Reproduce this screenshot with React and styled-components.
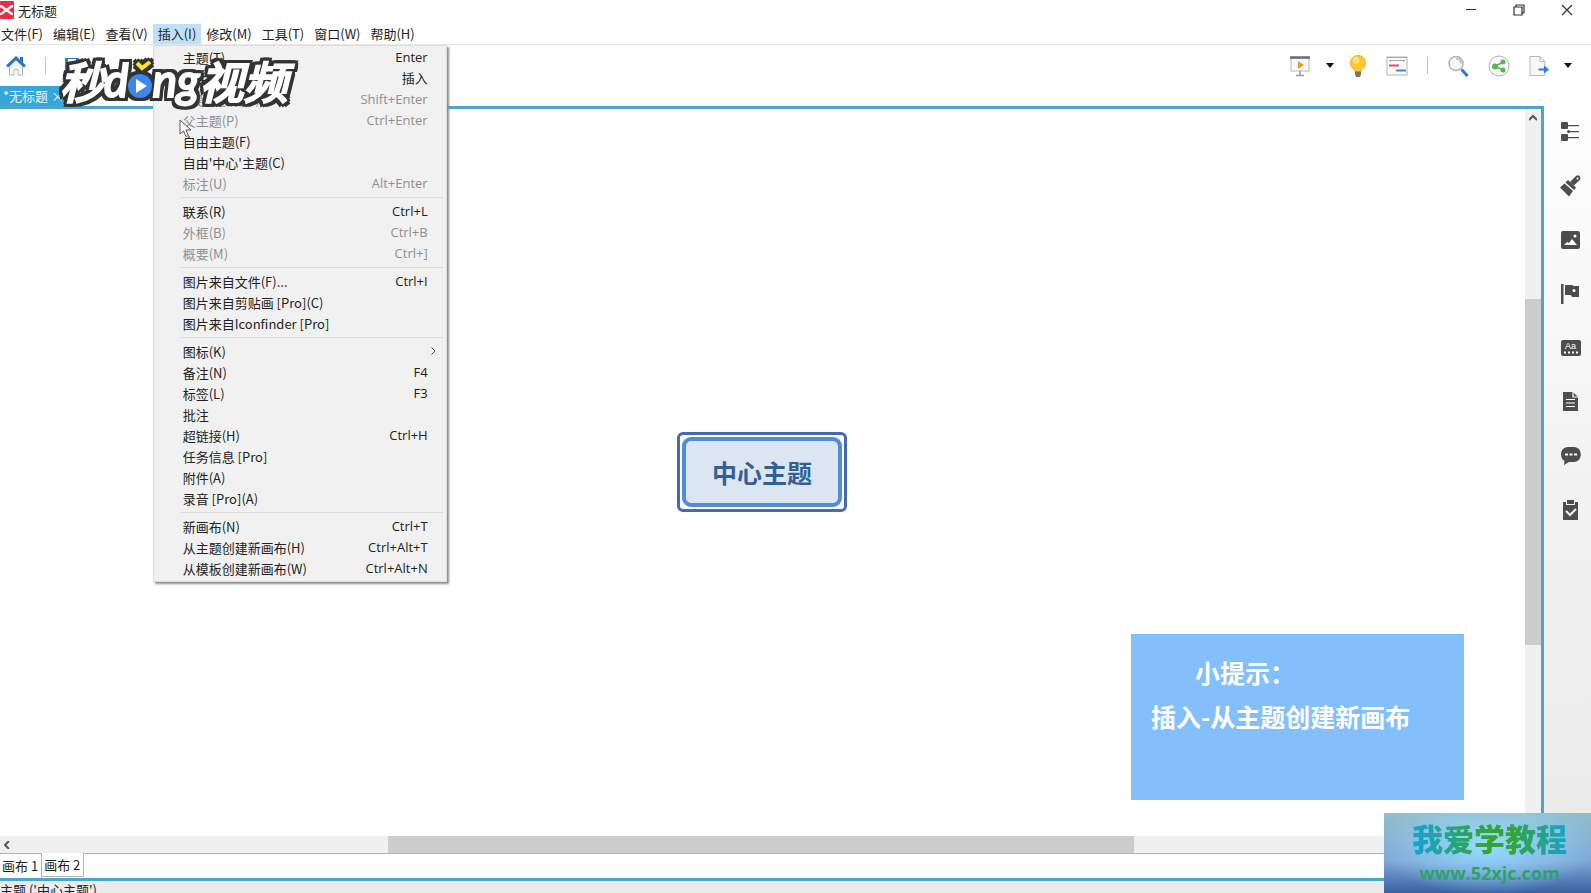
import React, { useState } from "react"
import styled, { createGlobalStyle } from "styled-components"

const MENUS = [
  "文件(F)",
  "编辑(E)",
  "查看(V)",
  "插入(I)",
  "修改(M)",
  "工具(T)",
  "窗口(W)",
  "帮助(H)",
]

const INSERT_GROUPS = [
  [
    { label: "主题(T)", keys: "Enter" },
    { label: "子主题(S)", keys: "插入" },
    { label: "主题(之前)(E)", keys: "Shift+Enter", disabled: true },
    { label: "父主题(P)", keys: "Ctrl+Enter", disabled: true },
    { label: "自由主题(F)" },
    { label: "自由'中心'主题(C)" },
    { label: "标注(U)", keys: "Alt+Enter", disabled: true },
  ],
  [
    { label: "联系(R)", keys: "Ctrl+L" },
    { label: "外框(B)", keys: "Ctrl+B", disabled: true },
    { label: "概要(M)", keys: "Ctrl+]", disabled: true },
  ],
  [
    { label: "图片来自文件(F)...", keys: "Ctrl+I" },
    { label: "图片来自剪贴画 [Pro](C)" },
    { label: "图片来自Iconfinder [Pro]" },
  ],
  [
    { label: "图标(K)", submenu: true },
    { label: "备注(N)", keys: "F4" },
    { label: "标签(L)", keys: "F3" },
    { label: "批注" },
    { label: "超链接(H)", keys: "Ctrl+H" },
    { label: "任务信息 [Pro]" },
    { label: "附件(A)" },
    { label: "录音 [Pro](A)" },
  ],
  [
    { label: "新画布(N)", keys: "Ctrl+T" },
    { label: "从主题创建新画布(H)", keys: "Ctrl+Alt+T" },
    { label: "从模板创建新画布(W)", keys: "Ctrl+Alt+N" },
  ],
]

// --- Icons ---

const AppIcon = () => (
  <svg width="14" height="18" viewBox="0 0 14 18">
    <rect width="14" height="18" rx="1" fill="#ee2a48" />
    <path
      d="M0 5C3 5 4 8.500 6.500 8.500S10 5 13 5M0 13C3 13 4 9.500 6.500 9.500S10 13 13 13"
      fill="none"
      stroke="#fff"
      strokeWidth="2.500"
    />
  </svg>
)

const HomeIcon = () => (
  <svg width="20" height="20" viewBox="0 0 20 20">
    <path d="M3.500 10v9h4.500v-5.500h4V19h4.500v-9L10 4z" fill="#f6f6f6" stroke="#b5b5b5" />
    <path d="M1 10.500L10 2l9 8.500" fill="none" stroke="#2273dc" strokeWidth="3" />
    <path d="M14 1h3v6l-3-3z" fill="#2273dc" />
  </svg>
)

const SaveIcon = () => (
  <svg width="14" height="16" viewBox="0 0 14 16">
    <path d="M0 0h14v16H0z" fill="#2b7be0" />
    <path d="M3 1h8v5H3z" fill="#fff" />
  </svg>
)

const PresentIcon = () => (
  <svg width="22" height="22" viewBox="0 0 22 22">
    <rect x="2" y="3" width="18" height="13" fill="#fafafa" stroke="#b9b9b9" />
    <path d="M1 2.500h20" stroke="#6c6c6c" strokeWidth="2.500" />
    <path d="M11 16v4M7 20.500h8" stroke="#9b9b9b" strokeWidth="1.500" />
    <path d="M9 6l6 4-6 4z" fill="#f39a1d" />
  </svg>
)

const BulbIcon = () => (
  <svg width="18" height="24" viewBox="0 0 18 24">
    <path
      d="M9 1.500a7.500 7.500 0 0 0-4.500 13.500c1 1 1.500 1.500 1.500 2.500h6c0-1 .5-1.500 1.500-2.500A7.500 7.500 0 0 0 9 1.500z"
      fill="#fdc931"
      stroke="#f0b323"
    />
    <ellipse cx="7" cy="6.500" rx="3" ry="3.500" fill="#ffe48a" />
    <path d="M6 17.500h6V21l-1.500 2h-3L6 21z" fill="#84735a" />
  </svg>
)

const GanttIcon = () => (
  <svg width="22" height="20" viewBox="0 0 22 20">
    <rect x="1" y="1" width="20" height="18" fill="#fafafa" stroke="#b5b5b5" />
    <path d="M1 1.500h20M3 4.500h16M4.500 4v2M17.500 4v2" stroke="#a8a8a8" />
    <path d="M3 9.500h10" stroke="#e05252" strokeWidth="2" />
    <path d="M10 14.500h10" stroke="#3e85d8" strokeWidth="2" />
  </svg>
)

const SearchIcon = () => (
  <svg width="22" height="22" viewBox="0 0 22 22">
    <circle cx="9" cy="8.500" r="7" fill="#f5f8fb" stroke="#b0b3b8" strokeWidth="1.500" />
    <path d="M9 3.500a5 5 0 0 1 5 5" fill="none" stroke="#8ec1f5" strokeWidth="1.500" />
    <path d="M14.500 14.500l6 6.500" stroke="#2b77dd" strokeWidth="3" />
  </svg>
)

const ShareIcon = () => (
  <svg width="22" height="22" viewBox="0 0 22 22">
    <circle cx="11" cy="11" r="10" fill="#fbfbfb" stroke="#b5b5b5" />
    <path d="M15 7L7 11.500l8 3.500" fill="none" stroke="#59b653" strokeWidth="1.500" />
    <circle cx="15" cy="7" r="2.500" fill="#59b653" />
    <circle cx="7" cy="11.500" r="3" fill="#59b653" />
    <circle cx="15" cy="15" r="2.500" fill="#59b653" />
  </svg>
)

const ExportIcon = () => (
  <svg width="20" height="22" viewBox="0 0 20 22">
    <path d="M1 1.500h10l5 5v14H1z" fill="#f8f8f8" stroke="#b9b9b9" />
    <path d="M11 1.500v5h5" fill="none" stroke="#b9b9b9" />
    <path d="M9.500 14.500H16" stroke="#2b7be0" strokeWidth="2" />
    <path d="M15 10.500l5 4-5 4z" fill="#2b7be0" />
  </svg>
)

const CaretIcon = () => (
  <svg width="8" height="5" viewBox="0 0 8 5">
    <path d="M0 0h8L4 5z" fill="#111" />
  </svg>
)

const Chevron = ({ d }) => (
  <svg width="8" height="8" viewBox="0 0 8 8">
    <path d={d} fill="none" stroke="#555" strokeWidth="2" />
  </svg>
)

const ThinChevron = () => (
  <svg width="5" height="8" viewBox="0 0 5 8">
    <path d="M.5.5L4 4 .5 7.500" fill="none" stroke="#555" />
  </svg>
)

const SIDE_VIEWS = [
  {
    name: "大纲",
    art: (
      <>
        <rect x="1" y="1" width="7" height="7" rx="1" />
        <rect x="1" y="13" width="7" height="7" rx="1" />
        <circle cx="8.500" cy="10.500" r="1.500" />
        <path d="M8 4h11v1.200H8zM9 10h10v1.200H9zM8 16h11v1.200H8z" />
      </>
    ),
  },
  {
    name: "格式",
    art: (
      <>
        <path d="M0 12.500l4.500-4 8.500 7.500-4 5.500z" />
        <path d="M5.500 7.500L8 5l8 7.500-2 2.500z" />
        <path d="M10 7l6-6c2-2 5.500 1 4 3.500L14 10.500z" />
        <circle cx="17.500" cy="3.500" r="1" fill="#fff" />
      </>
    ),
  },
  {
    name: "图片",
    art: (
      <>
        <rect x="1" y="2" width="19" height="18" rx="2" />
        <path d="M4 16l3-3 2 1 3-4 5 6z" fill="#fff" />
        <circle cx="15" cy="7" r="1.500" fill="#fff" />
      </>
    ),
  },
  {
    name: "图标",
    art: (
      <>
        <path d="M1 1h2.500v20H1zM5 2h7l1.500 1H19v11h-7l-1-2H5z" />
        <circle cx="14" cy="7.500" r="1.500" fill="#fff" />
      </>
    ),
  },
  {
    name: "标签",
    art: (
      <>
        <rect x="1" y="3" width="20" height="16" rx="2" />
        <text x="5" y="12" fontSize="9" fontFamily="Liberation Sans" fill="#fff">
          Aa
        </text>
        <path d="M4 15.500h15" stroke="#fff" strokeWidth="2" strokeDasharray="2 2" />
      </>
    ),
  },
  {
    name: "备注",
    art: (
      <>
        <path d="M3 1h10l5 5v14H3z" />
        <path d="M13 1v5h5M6 8.500h9M6 12h9M6 15.500h9" fill="none" stroke="#fff" strokeWidth="1.200" />
      </>
    ),
  },
  {
    name: "批注",
    art: (
      <>
        <path d="M8 2h6c9 0 9 15 0 15H9l-5 3 .5-4C-1 13 0 2 8 2z" />
        <path d="M5 8.500h3v2H5zM9.500 8.500h3v2h-3zM14 8.500h3v2h-3z" fill="#fff" />
      </>
    ),
  },
  {
    name: "任务信息",
    art: (
      <>
        <path d="M3 3h3v3h9V3h3v18H3z" />
        <path d="M7 1h7v4H7z" />
        <path d="M6 12l4 4 6-6" fill="none" stroke="#fff" strokeWidth="2" />
      </>
    ),
  },
]

const App = () => {
  const [activeMenu, setActiveMenu] = useState("插入(I)")
  const [activeSheet, setActiveSheet] = useState("画布 2")

  return (
    <>
      <GlobalStyle />
      <Window>
        <TitleBar>
          <AppIcon />
          <Title>无标题</Title>
          <WindowButtons>
            <WindowButton aria-label="最小化">
              <svg width="12" height="12" viewBox="0 0 12 12">
                <path d="M1 5.500h10" stroke="#333" />
              </svg>
            </WindowButton>
            <WindowButton aria-label="还原">
              <svg width="12" height="12" viewBox="0 0 12 12">
                <path d="M1 3h8v8H1zM3 3V1h8v8H9" fill="none" stroke="#333" strokeWidth="1.200" />
              </svg>
            </WindowButton>
            <WindowButton aria-label="关闭">
              <svg width="12" height="12" viewBox="0 0 12 12">
                <path d="M1 1l10 10M11 1L1 11" stroke="#333" strokeWidth="1.200" />
              </svg>
            </WindowButton>
          </WindowButtons>
        </TitleBar>

        <MenuBar>
          {MENUS.map((name) => (
            <MenuHolder key={name}>
              <MenuButton $open={name === activeMenu} onClick={() => setActiveMenu(name)}>
                {name}
              </MenuButton>
              {name === activeMenu && name === "插入(I)" && <InsertMenu />}
            </MenuHolder>
          ))}
        </MenuBar>

        <ToolBar>
          <ToolGroup>
            <ToolButton aria-label="主页">
              <HomeIcon />
            </ToolButton>
            <ToolDivider />
            <ToolButton aria-label="保存">
              <SaveIcon />
            </ToolButton>
          </ToolGroup>
          <ToolGroup>
            <ToolButton aria-label="演示">
              <PresentIcon />
            </ToolButton>
            <CaretButton aria-label="演示选项">
              <CaretIcon />
            </CaretButton>
            <ToolButton aria-label="头脑风暴">
              <BulbIcon />
            </ToolButton>
            <ToolButton aria-label="甘特图">
              <GanttIcon />
            </ToolButton>
            <ToolDivider />
            <ToolButton aria-label="搜索">
              <SearchIcon />
            </ToolButton>
            <ToolButton aria-label="分享">
              <ShareIcon />
            </ToolButton>
            <ToolButton aria-label="导出">
              <ExportIcon />
            </ToolButton>
            <CaretButton aria-label="导出选项">
              <CaretIcon />
            </CaretButton>
          </ToolGroup>
        </ToolBar>

        <Workspace>
          <Editor>
            <EditorTabs>
              <EditorTab>*无标题 ×</EditorTab>
            </EditorTabs>
            <EditorFrame>
              <CanvasRow>
                <Canvas>
                  <Topic>
                    <TopicText>中心主题</TopicText>
                  </Topic>
                  <Tip>
                    <TipTitle>小提示：</TipTitle>
                    <div>插入-从主题创建新画布</div>
                  </Tip>
                </Canvas>
                <VerticalTrack>
                  <TrackButton aria-label="向上滚动">
                    <Chevron d="M0 6l4-4 4 4" />
                  </TrackButton>
                  <VerticalThumb />
                </VerticalTrack>
              </CanvasRow>
              <HorizontalTrack>
                <TrackButton aria-label="向左滚动">
                  <Chevron d="M5 0L1 4l4 4" />
                </TrackButton>
                <HorizontalThumb />
              </HorizontalTrack>
              <SheetTabs>
                {["画布 1", "画布 2"].map((name) => (
                  <SheetTab
                    key={name}
                    $active={name === activeSheet}
                    onClick={() => setActiveSheet(name)}
                  >
                    {name}
                  </SheetTab>
                ))}
              </SheetTabs>
            </EditorFrame>
          </Editor>
          <SideBar>
            {SIDE_VIEWS.map((view) => (
              <SideButton key={view.name} aria-label={view.name}>
                <svg width="22" height="22" viewBox="0 0 22 22" fill="#4d4d4d">
                  {view.art}
                </svg>
              </SideButton>
            ))}
          </SideBar>
        </Workspace>

        <StatusBar>主题 ('中心主题')</StatusBar>

        <VideoLogo>
          <LogoHan>秒</LogoHan>
          <LogoLatin>d</LogoLatin>
          <PlayMark />
          <LogoLatin>ng</LogoLatin>
          <LogoHan>视频</LogoHan>
        </VideoLogo>
        <Pointer width="13" height="19" viewBox="0 0 13 19">
          <path d="M1 1v14l3.500-3 2.500 5.500 2.500-1-2.500-5.500H12z" fill="#fff" stroke="#555" />
        </Pointer>
        <SiteBadge>
          <SiteName>我爱学教程</SiteName>
          <SiteUrl>www.52xjc.com</SiteUrl>
        </SiteBadge>
      </Window>
    </>
  )
}

const InsertMenu = () => (
  <DropMenu role="menu">
    {INSERT_GROUPS.map((group) => (
      <DropGroup key={group[0].label}>
        {group.map((item) => (
          <DropItem key={item.label} role="menuitem" disabled={item.disabled}>
            <span>{item.label}</span>
            {item.keys && <Shortcut>{item.keys}</Shortcut>}
            {item.submenu && (
              <SubmenuMark>
                <ThinChevron />
              </SubmenuMark>
            )}
          </DropItem>
        ))}
      </DropGroup>
    ))}
  </DropMenu>
)

const PlayMark = () => (
  <PlaySvg width="24" height="44" viewBox="0 0 24 44">
    <circle cx="12" cy="28" r="12" fill="#3d86ee" />
    <path d="M8 21v14l11-7z" fill="#fff" />
    <path d="M9 5l5 5 8-6" fill="none" stroke="#f8e52c" strokeWidth="4" />
  </PlaySvg>
)

export default App

// --- Styled Components ---

const GlobalStyle = createGlobalStyle`
  * {
    box-sizing: border-box;
  }

  body {
    margin: 0;
    overflow: hidden;
    font-family: "Noto Sans CJK SC", sans-serif;
    font-size: 13px;
    color: #222;
    background: #fff;
  }

  button {
    padding: 0;
    border: 0;
    background: none;
    color: inherit;
    font: inherit;
  }

  svg {
    display: block;
    flex: none;
  }
`

const Window = styled.div`
  position: relative;
  display: flex;
  flex-direction: column;
  height: 100vh;
  overflow: hidden;
`

const TitleBar = styled.header`
  display: flex;
  align-items: center;
  flex: none;
  height: 24px;
  padding-bottom: 4px;
`

const Title = styled.span`
  flex: 1;
  padding-left: 4px;
`

const WindowButtons = styled.div`
  display: flex;
`

const WindowButton = styled.button`
  display: flex;
  align-items: center;
  justify-content: center;
  width: 48px;
  height: 20px;
`

const MenuBar = styled.nav`
  display: flex;
  flex: none;
  height: 21px;
  margin-left: -4px;
  border-bottom: 1px solid #e8e8e8;
`

const MenuHolder = styled.div`
  position: relative;
`

const MenuButton = styled.button`
  height: 20px;
  padding: 0 5px;
  line-height: 20px;
  background: ${(props) => (props.$open ? "#bfe0f8" : "transparent")};
`

const DropMenu = styled.div`
  position: absolute;
  z-index: 5;
  top: 21px;
  left: 0;
  width: 294px;
  padding: 1px 0 2px;
  border: 1px solid #dcdcdc;
  background: #f1f1f1;
  box-shadow: 2px 2px 2px #8c8c8c;
`

const DropGroup = styled.div`
  & + & {
    margin-top: 3px;
    padding-top: 4px;
    background: linear-gradient(#dcdcdc, #dcdcdc) 27px 0 / 262px 1px no-repeat;
  }
`

const DropItem = styled.button`
  position: relative;
  display: flex;
  justify-content: space-between;
  width: 100%;
  height: 21px;
  padding: 0 18px 0 29px;
  line-height: 21px;
  color: ${(props) => (props.disabled ? "#8f8f8f" : "#222")};
`

const Shortcut = styled.span`
  font-family: "Open Sans", "Noto Sans CJK SC", sans-serif;
`

const SubmenuMark = styled.span`
  position: absolute;
  top: 6px;
  right: 10px;
`

const ToolBar = styled.div`
  display: flex;
  justify-content: space-between;
  flex: none;
  height: 41px;
  padding: 0 23px 0 6px;
`

const ToolGroup = styled.div`
  display: flex;
  align-items: center;
  gap: 19px;
`

const ToolButton = styled.button`
  display: flex;
  align-items: center;
`

const CaretButton = styled(ToolButton)`
  margin: 0 -4px;
`

const ToolDivider = styled.span`
  width: 1px;
  height: 17px;
  background: #c4c4c4;
`

const Workspace = styled.main`
  display: flex;
  flex: 1;
  min-height: 0;
`

const Editor = styled.section`
  display: flex;
  flex-direction: column;
  flex: 1;
  min-width: 0;
`

const EditorTabs = styled.div`
  display: flex;
  flex: none;
  height: 20px;
`

const EditorTab = styled.button`
  width: 68px;
  padding-left: 3px;
  text-align: left;
  white-space: nowrap;
  line-height: 20px;
  color: #e8f6fd;
  background: #36a5d8;
`

const EditorFrame = styled.div`
  display: flex;
  flex-direction: column;
  flex: 1;
  min-height: 0;
  border: 3px solid #4aa5d3;
  border-left: 0;
`

const CanvasRow = styled.div`
  display: flex;
  flex: 1;
  min-height: 0;
`

const Canvas = styled.div`
  position: relative;
  flex: 1;
`

const Topic = styled.div`
  position: absolute;
  top: 323px;
  left: 677px;
  padding: 2px;
  border: 3px solid #4569b6;
  border-radius: 6px;
  background: #fff;
`

const TopicText = styled.div`
  padding: 16px 26px;
  border: 4px solid #508cd8;
  border-radius: 9px;
  background: #dce5f2;
  color: #325f97;
  font-size: 25px;
  font-weight: 700;
  line-height: 30px;
`

const Tip = styled.aside`
  position: absolute;
  right: 61px;
  bottom: 36px;
  width: 333px;
  height: 166px;
  padding: 16px 20px;
  background: #84bffd;
  color: #fff;
  font-size: 25px;
  font-weight: 700;
  line-height: 44px;
  white-space: nowrap;
`

const TipTitle = styled.div`
  padding-left: 44px;
`

const VerticalTrack = styled.div`
  display: flex;
  flex-direction: column;
  width: 16px;
  background: #f0f0f0;
`

const TrackButton = styled.button`
  display: flex;
  align-items: center;
  justify-content: center;
  flex: none;
  width: 16px;
  height: 17px;
`

const VerticalThumb = styled.div`
  height: 346px;
  margin-top: 173px;
  background: #cdcdcd;
`

const HorizontalTrack = styled.div`
  display: flex;
  flex: none;
  height: 17px;
  background: #f0f0f0;
`

const HorizontalThumb = styled.div`
  width: 746px;
  margin-left: 372px;
  background: #cdcdcd;
`

const SheetTabs = styled.div`
  display: flex;
  flex: none;
  height: 25px;
  border-top: 1px solid #b4b4b4;
`

const SheetTab = styled.button`
  height: 24px;
  margin-top: ${(props) => (props.$active ? "-1px" : "0")};
  padding: 0 3px 0 2px;
  border: solid #b4b4b4;
  border-width: 0 1px ${(props) => (props.$active ? "1px" : "0")} 0;
  line-height: 22px;
  background: #fff;
`

const SideBar = styled.aside`
  display: flex;
  flex-direction: column;
  align-items: center;
  gap: 32px;
  width: 47px;
  padding: 35px 0 0 6px;
  background: linear-gradient(#fff, #f0f0f0 60%, #eaeaea);
`

const SideButton = styled.button`
  width: 22px;
  height: 22px;
`

const StatusBar = styled.footer`
  flex: none;
  height: 12px;
  overflow: hidden;
  line-height: 18px;
  background: #ebebeb;
`

/* the four shadows chain into one dark outline behind the whole logo */
const VideoLogo = styled.div`
  position: absolute;
  z-index: 6;
  top: 54px;
  left: 60px;
  display: flex;
  align-items: center;
  height: 52px;
  color: #fff;
  font-style: italic;
  font-weight: 500;
  -webkit-text-stroke: 2px #fff;
  filter: drop-shadow(3px 0 #333) drop-shadow(-3px 0 #333) drop-shadow(0 3px #333)
    drop-shadow(0 -3px #333);
`

const LogoHan = styled.span`
  font-size: 44px;
  line-height: 52px;
`

const LogoLatin = styled.span`
  font-family: Lato, sans-serif;
  font-size: 46px;
  line-height: 52px;
`

const PlaySvg = styled.svg`
  overflow: visible;
`

const Pointer = styled.svg`
  position: absolute;
  z-index: 7;
  top: 119px;
  left: 179px;
`

const SiteBadge = styled.div`
  position: absolute;
  z-index: 6;
  right: 0;
  bottom: 0;
  width: 207px;
  height: 80px;
  padding: 5px 0 0 4px;
  text-align: center;
  background:
    radial-gradient(ellipse at 50% 40%, #94dcff 0%, rgba(148, 220, 255, 0) 75%),
    linear-gradient(#93bdc9, #7ea7d8 60%, #3b619f);
`

const SiteName = styled.div`
  font-size: 31px;
  font-weight: 900;
  line-height: 40px;
  color: transparent;
  background: linear-gradient(90deg, #14a5c8 15%, #35a437 48%, #35a437 60%, #14a5c8 88%);
  background-clip: text;
`

const SiteUrl = styled.div`
  font-family: "Open Sans", sans-serif;
  font-size: 18px;
  font-weight: 700;
  line-height: 30px;
  color: #2ea266;
`
